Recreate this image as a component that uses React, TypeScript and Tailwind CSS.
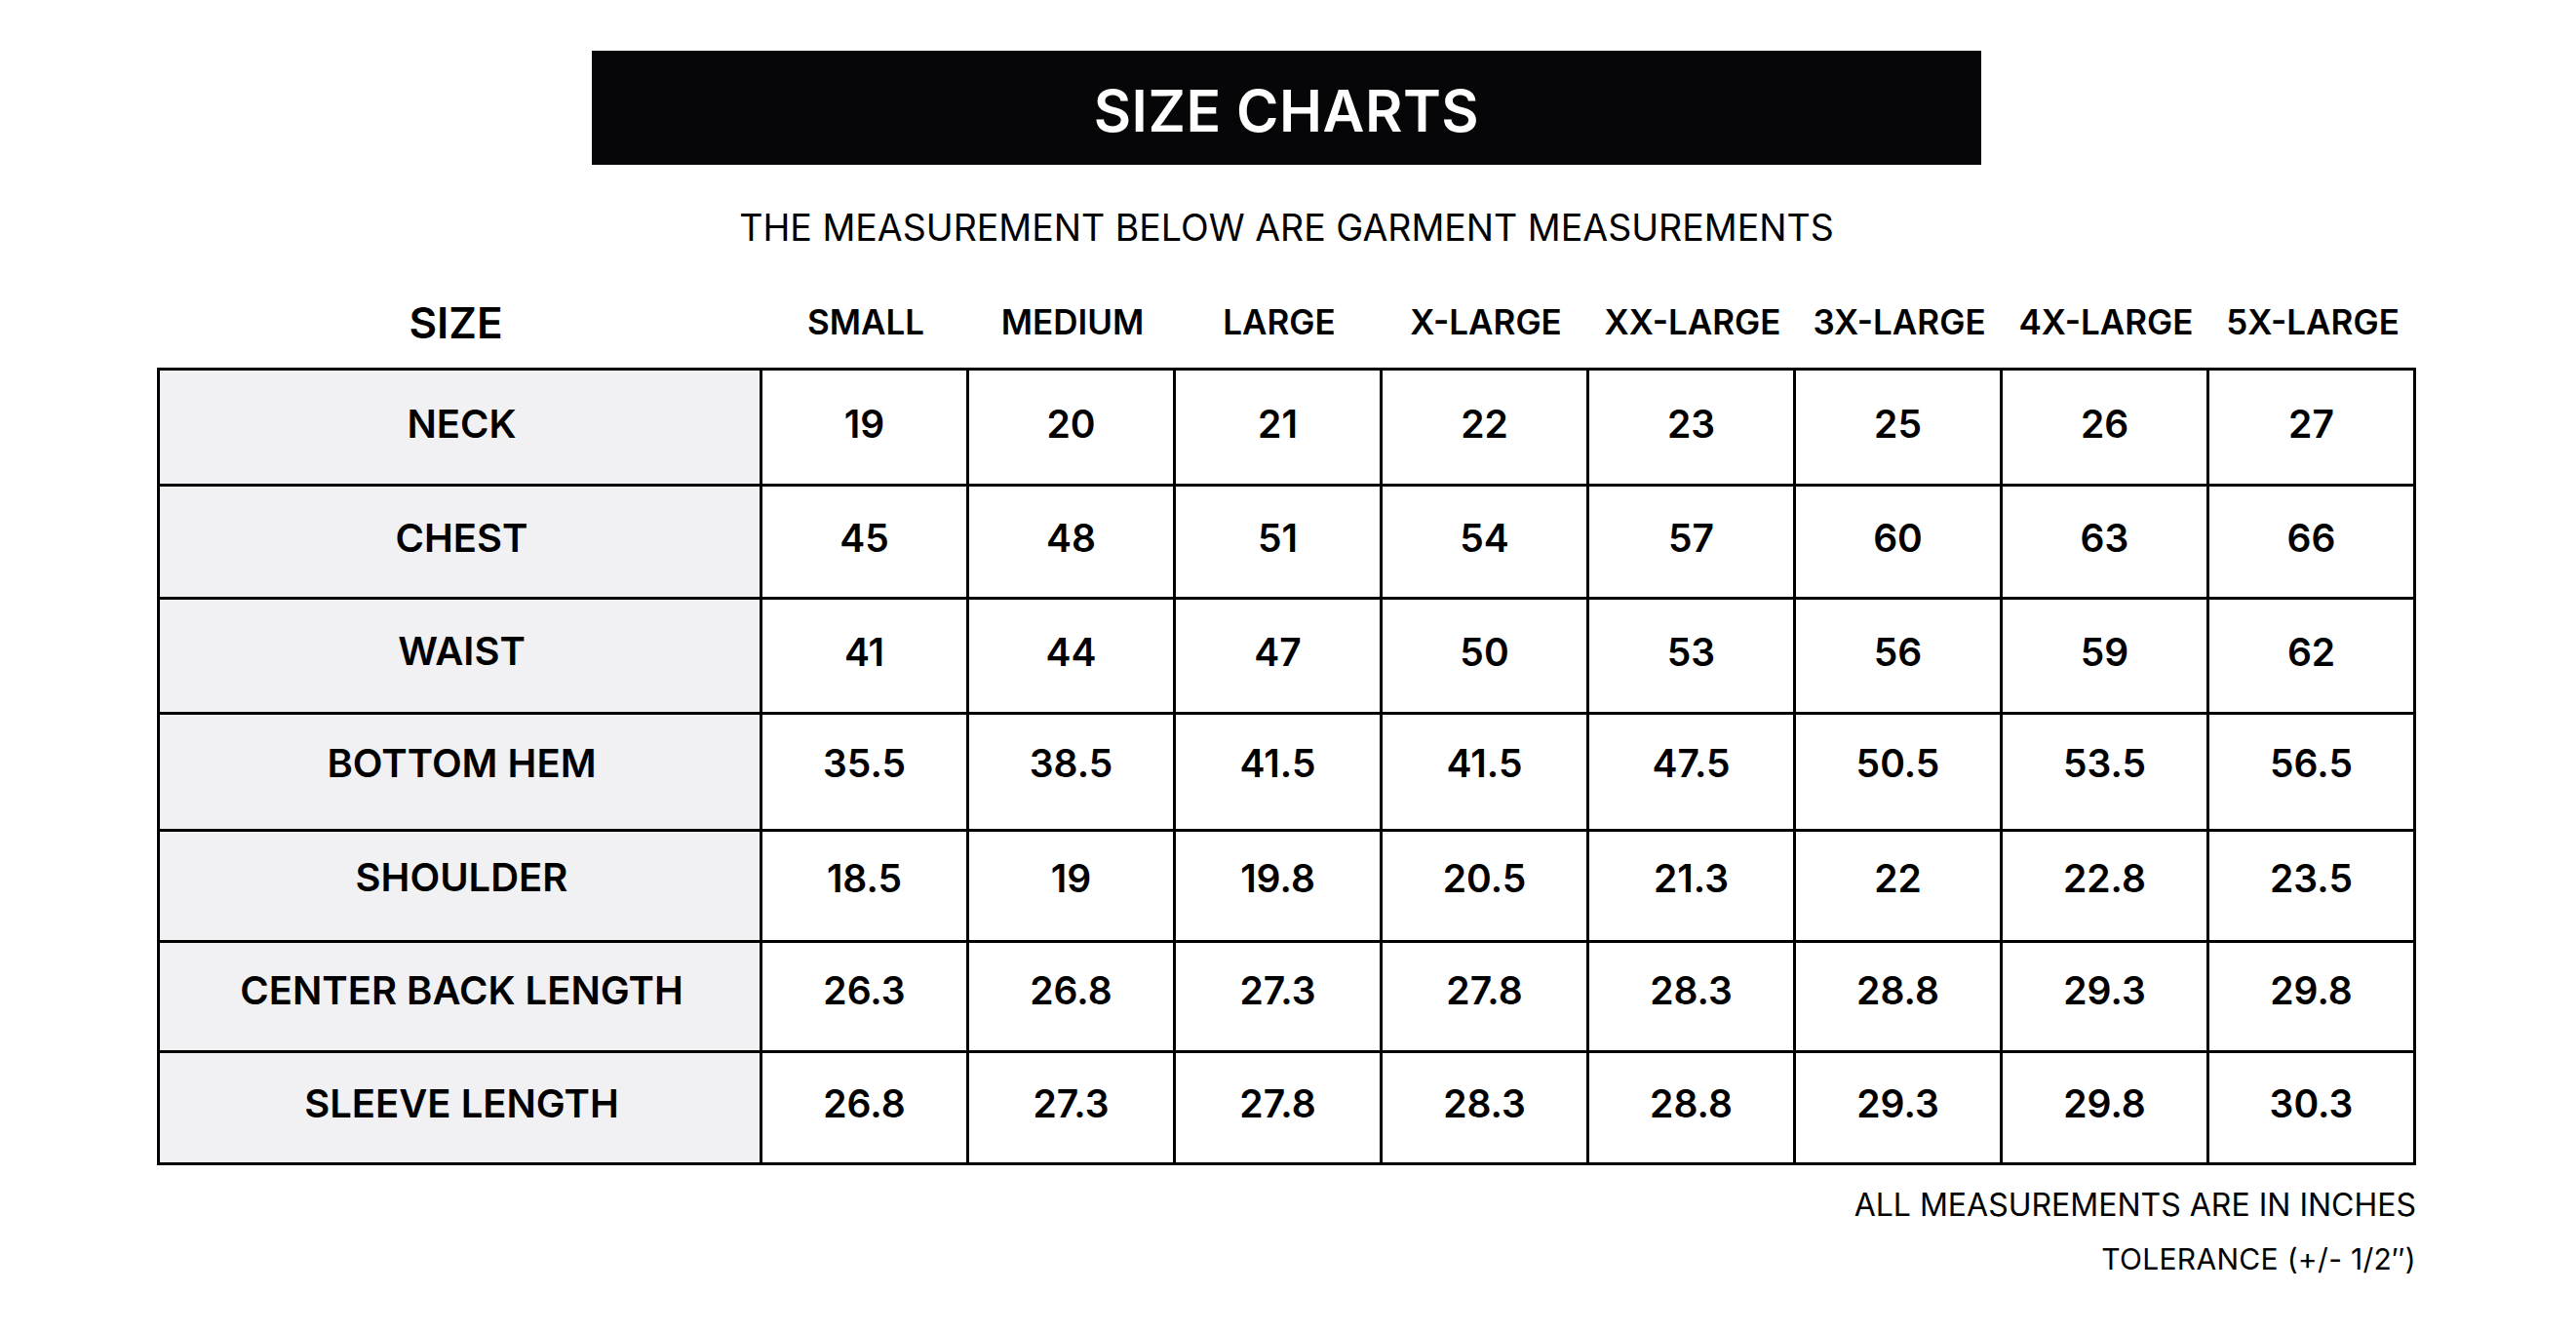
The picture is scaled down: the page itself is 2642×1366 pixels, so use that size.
import React from "react";

const sizes = ["SMALL", "MEDIUM", "LARGE", "X-LARGE", "XX-LARGE", "3X-LARGE", "4X-LARGE", "5X-LARGE"];

// row heights and text offsets follow the picture, they are not all equal
const rows: { label: string; h: string; values: string[] }[] = [
  { label: "NECK", h: "h-[119px] pb-[6px]", values: ["19", "20", "21", "22", "23", "25", "26", "27"] },
  { label: "CHEST", h: "h-[116px] pb-[7px]", values: ["45", "48", "51", "54", "57", "60", "63", "66"] },
  { label: "WAIST", h: "h-[118px] pb-[8px]", values: ["41", "44", "47", "50", "53", "56", "59", "62"] },
  { label: "BOTTOM HEM", h: "h-[120px] pb-[17px]", values: ["35.5", "38.5", "41.5", "41.5", "47.5", "50.5", "53.5", "56.5"] },
  { label: "SHOULDER", h: "h-[114px] pb-[16px]", values: ["18.5", "19", "19.8", "20.5", "21.3", "22", "22.8", "23.5"] },
  { label: "CENTER BACK LENGTH", h: "h-[113px] pb-[12px]", values: ["26.3", "26.8", "27.3", "27.8", "28.3", "28.8", "29.3", "29.8"] },
  { label: "SLEEVE LENGTH", h: "h-[115px] pb-[8px]", values: ["26.8", "27.3", "27.8", "28.3", "28.8", "29.3", "29.8", "30.3"] },
];

export default function App() {
  return (
    <div className="w-[2642px] h-[1366px] bg-white text-black font-['Inter',sans-serif] overflow-hidden">
      <div className="ml-[161px] w-[2317px] pt-[52px] flex flex-col">
        {/* title bar */}
        <div className="mx-auto w-[1425px] h-[117px] pt-[5px] bg-[#060608] flex items-center justify-center">
          <h1 className="text-white text-[59px] leading-none font-semibold tracking-[0.5px]">SIZE CHARTS</h1>
        </div>

        <p className="mt-[46px] text-center text-[37.5px] leading-none">
          THE MEASUREMENT BELOW ARE GARMENT MEASUREMENTS
        </p>

        {/* column headings */}
        <div className="mt-[44px] h-[66px] pt-[2px] grid grid-cols-[621px_repeat(8,212px)] items-center">
          <div className="text-center text-[44px] leading-none font-semibold pr-[8px]">SIZE</div>
          {sizes.map((s) => (
            <div key={s} className="text-center text-[35px] leading-none font-semibold whitespace-nowrap">
              {s}
            </div>
          ))}
        </div>

        {/* table */}
        <div className="mt-[14px] border-l-[3px] border-t-[3px] border-black grid grid-cols-[618px_repeat(8,212px)]">
          {rows.map((r) => (
            <React.Fragment key={r.label}>
              <div className={`${r.h} bg-[#f1f1f3] border-r-[3px] border-b-[3px] border-black flex items-center justify-center text-[40px] leading-none font-semibold pl-[4px]`}>
                {r.label}
              </div>
              {r.values.map((v, i) => (
                <div
                  key={i}
                  className={`${r.h} border-r-[3px] border-b-[3px] border-black flex items-center justify-center text-[39px] leading-none font-semibold`}
                >
                  {v}
                </div>
              ))}
            </React.Fragment>
          ))}
        </div>

        <div className="mt-[25px] flex flex-col items-end">
          <p className="text-[32px] leading-none">ALL MEASUREMENTS ARE IN INCHES</p>
          <p className="mt-[24px] text-[30px] leading-none tracking-[0.3px]">TOLERANCE (+/- 1/2″)</p>
        </div>
      </div>
    </div>
  );
}
